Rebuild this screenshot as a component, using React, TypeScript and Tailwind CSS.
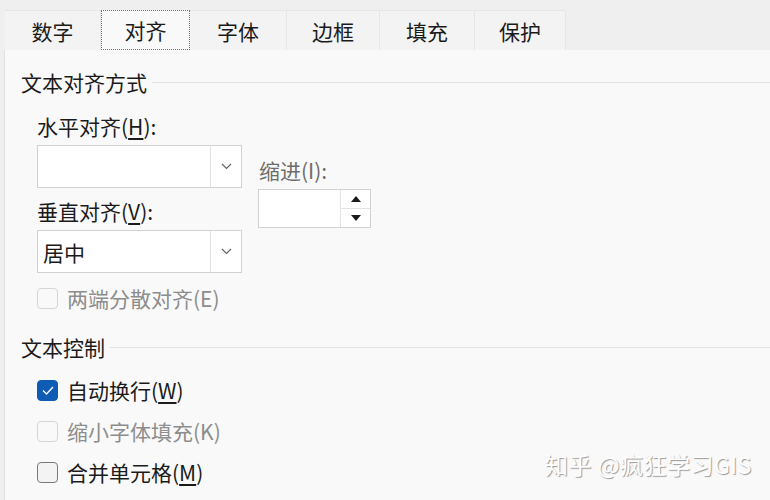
import React from 'react';

const tabs = [
  { label: '数字', w: 'w-[96px]' },
  { label: '对齐', w: 'w-[89px]', active: true },
  { label: '字体', w: 'w-[97px]' },
  { label: '边框', w: 'w-[93px]' },
  { label: '填充', w: 'w-[95px]' },
  { label: '保护', w: 'w-[91px]' },
];

const Chevron: React.FC = () => (
  <svg width="11" height="7" viewBox="0 0 11 7" fill="none">
    <path d="M1 1l4.5 4.5L10 1" stroke="#606060" strokeWidth="1.1" />
  </svg>
);

const ComboBox: React.FC<{ value?: string }> = ({ value }) => (
  <div className="flex h-[43px] w-[205px] border border-[#d2d2d2] bg-white">
    <div className="flex flex-1 items-center pl-[5px] text-[21px] text-[#1b1b1b]">{value}</div>
    <div className="flex w-[31px] items-center justify-center border-l border-[#e3e3e3]">
      <Chevron />
    </div>
  </div>
);

const SpinBox: React.FC = () => (
  <div className="flex h-[39px] w-[113px] border border-[#d2d2d2] bg-white">
    <div className="flex-1" />
    <div className="flex w-[30px] flex-col border-l border-[#e3e3e3]">
      <div className="flex flex-1 items-center justify-center border-b border-[#e3e3e3]">
        <svg width="10" height="6" viewBox="0 0 10 6">
          <path d="M5 0L10 6H0z" fill="#1b1b1b" />
        </svg>
      </div>
      <div className="flex flex-1 items-center justify-center">
        <svg width="10" height="6" viewBox="0 0 10 6">
          <path d="M0 0h10L5 6z" fill="#1b1b1b" />
        </svg>
      </div>
    </div>
  </div>
);

type CheckState = 'checked' | 'disabled' | 'normal';

const CheckRow: React.FC<{ state: CheckState; children: React.ReactNode }> = ({ state, children }) => {
  const box =
    state === 'checked'
      ? 'bg-[#0f5cb5] border-[#0f5cb5]'
      : state === 'disabled'
        ? 'bg-[#f9f9f9] border-[#d6d6d6]'
        : 'bg-[#f3f3f3] border-[#7a7a7a]';
  return (
    <div className="flex h-[26px] items-center gap-[9px]">
      <div className={`flex h-[21px] w-[21px] items-center justify-center rounded-[4px] border ${box}`}>
        {state === 'checked' && (
          <svg width="12" height="9" viewBox="0 0 12 9" fill="none">
            <path d="M1 4.5l3.5 3.5L11 1" stroke="white" strokeWidth="1.3" />
          </svg>
        )}
      </div>
      <span className={`text-[21px] ${state === 'disabled' ? 'text-[#8d8d8d]' : 'text-[#1b1b1b]'}`}>{children}</span>
    </div>
  );
};

const GroupHeader: React.FC<{ title: string }> = ({ title }) => (
  <div className="flex h-[26px] items-center gap-[5px] pl-[16px]">
    <span className="text-[21px] text-[#1b1b1b]">{title}</span>
    <div className="h-px flex-1 bg-[#e2e2e2]" />
  </div>
);

export default function App() {
  return (
    <div
      className="relative flex h-[500px] w-[770px] flex-col overflow-hidden bg-[#efefef] leading-[26px]"
      style={{ fontFamily: '"Noto Sans CJK SC", "Noto Sans", sans-serif' }}
    >
      {/* tab strip */}
      <div className="flex h-[50px] shrink-0 items-end pl-[5px]">
        {tabs.map((t) => (
          <div
            key={t.label}
            className={`flex h-[40px] ${t.w} items-center justify-center text-[21px] text-[#1b1b1b] ${
              t.active
                ? 'border border-dotted border-[#707070] bg-[#f9f9f9]'
                : 'border-r border-t border-[#e6e6e6] bg-[#f3f3f3]'
            }`}
          >
            {t.label}
          </div>
        ))}
      </div>

      {/* page body */}
      <div className="ml-[4px] flex-1 border-l border-[#e2e2e2] bg-[#f9f9f9] pt-[19px]">
        <GroupHeader title="文本对齐方式" />

        <div className="mt-[18px] flex gap-[16px] pl-[32px]">
          <div className="flex flex-col">
            <span className="text-[21px] text-[#1b1b1b]">
              水平对齐(<span className="underline underline-offset-[3px]">H</span>):
            </span>
            <div className="mt-[6px]">
              <ComboBox />
            </div>
            <span className="mt-[10px] text-[21px] text-[#1b1b1b]">
              垂直对齐(<span className="underline underline-offset-[3px]">V</span>):
            </span>
            <div className="mt-[6px]">
              <ComboBox value="居中" />
            </div>
          </div>
          <div className="flex flex-col pt-[44px]">
            <span className="pl-[1px] text-[21px] text-[#6e6e6e]">缩进(I):</span>
            <div className="mt-[6px]">
              <SpinBox />
            </div>
          </div>
        </div>

        <div className="mt-[12px] pl-[32px]">
          <CheckRow state="disabled">两端分散对齐(E)</CheckRow>
        </div>

        <div className="mt-[23px]">
          <GroupHeader title="文本控制" />
        </div>

        <div className="mt-[17px] flex flex-col gap-[15px] pl-[32px]">
          <CheckRow state="checked">
            自动换行(<span className="underline underline-offset-[3px]">W</span>)
          </CheckRow>
          <CheckRow state="disabled">缩小字体填充(K)</CheckRow>
          <CheckRow state="normal">
            合并单元格(<span className="underline underline-offset-[3px]">M</span>)
          </CheckRow>
        </div>
      </div>

      <div
        className="absolute left-[545px] top-[451px] text-[23px] tracking-[0.5px] text-white"
        style={{ textShadow: '1px 1px 1px #9a9a9a' }}
      >
        知乎 @疯狂学习GIS
      </div>
    </div>
  );
}
